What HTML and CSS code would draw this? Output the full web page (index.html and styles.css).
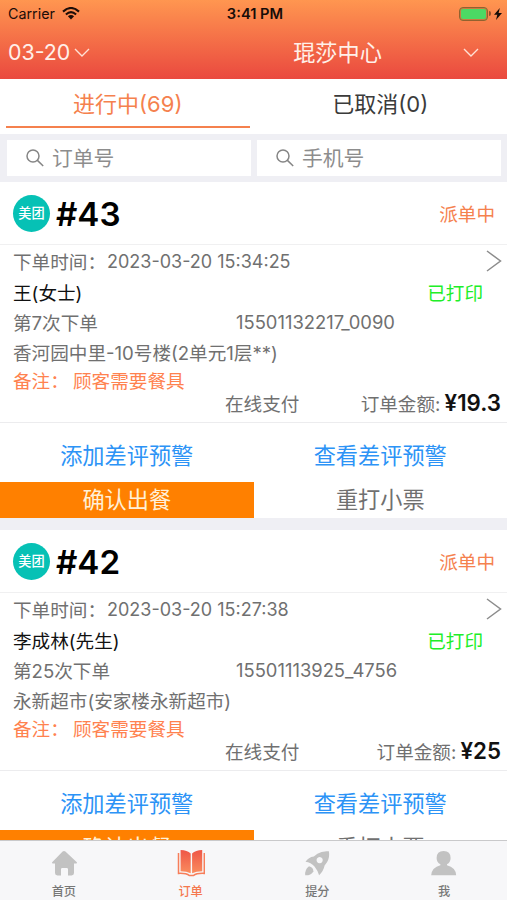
FILE: index.html
```html
<!DOCTYPE html>
<html lang="zh-CN">
<head>
<meta charset="utf-8">
<title>订单</title>
<link rel="stylesheet" href="styles.css">
</head>
<body>
<div class="app">
  <header class="header">
    <div class="status">
      <div class="carrier"><span>Carrier</span>
        <svg class="wifi" viewBox="0 0 18 13"><path d="M1 4.600Q9-2.600 17 4.600M3.900 7.500Q9 2.900 14.100 7.500" fill="none" stroke="#1c0d08" stroke-width="2.100"/><path d="M5.900 9.200Q9 6.700 12.100 9.200L9 12.400Z" fill="#1c0d08"/></svg>
      </div>
      <span class="clock">3:41 PM</span>
      <div class="power"><span class="battery"></span><span class="nub"></span>
        <svg class="bolt" viewBox="0 0 8 12"><path d="M5.800 0 0 6.800h3.300L2 12l6-7H4.600Z" fill="#160c08"/></svg>
      </div>
    </div>
    <div class="nav">
      <div class="date">03-20<svg class="chevron" viewBox="0 0 16 9"><path d="m1 1 7 7 7-7"/></svg></div>
      <span class="store">琨莎中心</span>
      <svg class="chevron" viewBox="0 0 16 9"><path d="m1 1 7 7 7-7"/></svg>
    </div>
  </header>
  <div class="tabs">
    <div class="tab active"><span>进行中(69)</span></div>
    <div class="tab"><span>已取消(0)</span></div>
  </div>
  <div class="search">
    <div class="field"><svg viewBox="0 0 18 18"><circle cx="7" cy="7" r="6"/><path d="m11.400 11.400 5.800 5.600"/></svg><span>订单号</span></div>
    <div class="field"><svg viewBox="0 0 18 18"><circle cx="7" cy="7" r="6"/><path d="m11.400 11.400 5.800 5.600"/></svg><span>手机号</span></div>
  </div>
  <main class="orders">
    <article class="order">
      <div class="order-head"><span class="logo">美团</span><span class="number">#43</span><span class="state">派单中</span></div>
      <div class="details">
        <div class="row time"><span class="time-label">下单时间：</span><span class="stamp">2023-03-20 15:34:25</span><svg class="arrow" viewBox="0 0 16 22"><path d="m1 1 13.500 10L1 21"/></svg></div>
        <div class="row customer"><span>王(女士)</span><span class="printed">已打印</span></div>
        <div class="row"><span class="count">第7次下单</span><span class="phone">15501132217_0090</span></div>
        <div class="row address">香河园中里-10号楼(2单元1层**)</div>
        <div class="row note"><span class="note-label">备注：</span><span>顾客需要餐具</span></div>
        <div class="row payment"><span class="method">在线支付</span><span class="total">订单金额: <b>¥19.3</b></span></div>
      </div>
      <div class="links"><a>添加差评预警</a><a>查看差评预警</a></div>
      <div class="buttons"><span class="primary">确认出餐</span><span>重打小票</span></div>
    </article>
    <article class="order">
      <div class="order-head"><span class="logo">美团</span><span class="number">#42</span><span class="state">派单中</span></div>
      <div class="details">
        <div class="row time"><span class="time-label">下单时间：</span><span class="stamp">2023-03-20 15:27:38</span><svg class="arrow" viewBox="0 0 16 22"><path d="m1 1 13.500 10L1 21"/></svg></div>
        <div class="row customer"><span>李成林(先生)</span><span class="printed">已打印</span></div>
        <div class="row"><span class="count">第25次下单</span><span class="phone">15501113925_4756</span></div>
        <div class="row address">永新超市(安家楼永新超市)</div>
        <div class="row note"><span class="note-label">备注：</span><span>顾客需要餐具</span></div>
        <div class="row payment"><span class="method">在线支付</span><span class="total">订单金额: <b>¥25</b></span></div>
      </div>
      <div class="links"><a>添加差评预警</a><a>查看差评预警</a></div>
      <div class="buttons"><span class="primary">确认出餐</span><span>重打小票</span></div>
    </article>
  </main>
  <nav class="tabbar">
    <div class="item"><svg viewBox="0 0 28 28"><path d="M12.600 2.600q1.400-1.200 2.800 0L26.600 13q1.300 1.300-.5 1.500H24v9.600q0 2.400-2.400 2.400H18v-6.200q0-1.300-1.300-1.300h-4.400q-1.300 0-1.300 1.300v6.200H7.400Q5 26.500 5 24.100v-9.600H2.900Q1.100 14.300 2.400 13Z" fill="#c2c2c2"/></svg><span>首页</span></div>
    <div class="item current"><svg viewBox="0 0 28 28"><defs><linearGradient id="book" x1="0" y1="0" x2="0" y2="1"><stop offset="0" stop-color="#ee5647"/><stop offset="1" stop-color="#fa8d5f"/></linearGradient></defs><path d="M3.600 1Q10.200 1.200 13.700 4.500V24.300Q9.700 22.500 3.600 22.300ZM25.200 1Q18.600 1.200 15.100 4.500V24.300Q19.100 22.500 25.200 22.300Z" fill="url(#book)"/><path d="M1.500 4v20.400q7.500-.4 11 2.200h3.800q3.500-2.600 11-2.200V4" fill="none" stroke="#f77e5a" stroke-width="1.500"/></svg><span>订单</span></div>
    <div class="item"><svg viewBox="0 0 28 28"><path fill-rule="evenodd" d="M25.900 2.300Q19 1.600 14.400 4.800L10.800 7.500Q5.500 8.200 2.500 12.700 8 13.500 11.500 17.400 14.500 21 16.100 26.300 20.600 21.800 21.600 16.500L24 13.200Q27 8.400 25.900 2.300ZM16.600 8a3.100 3.100 0 1 0 .1 0Z" fill="#c2c2c2"/><path d="M6 17.200Q1.600 20.500 2.200 26.300 7.700 26.600 10.400 22.400 10.300 18 6 17.200Z" fill="#c2c2c2"/></svg><span>提分</span></div>
    <div class="item"><svg viewBox="0 0 28 28"><path d="M13.600 2q7 0 7 7 0 4.300-3.600 6.300v1q8.600 2.200 9.200 9.900H1.200q.6-7.700 9.200-9.900v-1Q6.600 13.300 6.600 9q0-7 7-7Z" fill="#c2c2c2"/></svg><span>我</span></div>
  </nav>
</div>
</body>
</html>
```
FILE: styles.css
```css
* { box-sizing: border-box; }
body {
  margin: 0;
  font-family: Inter, "Noto Sans CJK SC", sans-serif;
  font-size: 18.600px;
  color: #707070;
  background: #fff;
}
.app { display: flex; flex-direction: column; width: 507px; height: 900px; overflow: hidden; }
svg { display: block; flex: none; }

.header { flex: none; height: 79px; background: linear-gradient(#ff9650, #ea493f); }
.status { display: grid; grid-template-columns: 1fr auto 1fr; align-items: center; height: 27px; padding: 0 5px 0 8px; color: #1c0d08; font-size: 14.300px; }
.carrier { display: flex; align-items: center; gap: 7px; }
.wifi { width: 18px; height: 13px; }
.clock { font-weight: 600; font-size: 14.700px; color: #160c08; }
.power { display: flex; align-items: center; justify-content: flex-end; }
.battery { width: 29px; height: 14px; border: 1px solid #92612f; border-radius: 4px; background: #4cd964; box-shadow: inset 0 0 0 1px #c97a40; }
.nub { width: 2px; height: 5px; margin-left: 1px; border-radius: 0 2px 2px 0; background: #92512c; }
.bolt { width: 8px; height: 12px; margin-left: 3px; }
.nav { display: grid; grid-template-columns: 215px 1fr 44px; align-items: center; height: 50px; padding-left: 8px; color: #fff0e9; font-size: 22.200px; }
.date { display: flex; align-items: center; gap: 4px; font-size: 21.400px; }
.chevron { width: 16px; height: 9px; fill: none; stroke: #ffe1d5; stroke-width: 1.400; }
.store { text-align: center; padding: 0 11px 2px 0; }

.tabs { flex: none; display: grid; grid-template-columns: 1fr 1fr; height: 55px; padding: 0 0 6px; color: #3b3b3b; font-size: 22px; }
.tab { display: flex; justify-content: center; align-items: center; margin: 0 4px 0 6px; padding-bottom: 2px; border-bottom: 2px solid transparent; }
.tab:last-child { margin: 0; }
.tab.active { color: #f5814e; border-color: #f5814e; }

.search { flex: none; display: grid; grid-template-columns: 244px 244px; gap: 6px; height: 48px; padding: 6px 7px; background: #efeff4; }
.field { display: flex; align-items: center; gap: 8px; padding-left: 19px; background: #fff; color: #8d8d8d; font-size: 20.800px; }
.field span { padding-bottom: 2px; }
.field svg { width: 18px; height: 18px; fill: none; stroke: #858585; stroke-width: 1.500; }

.orders { flex: 1; min-height: 0; overflow: hidden; }
.order { border-bottom: 12px solid #efeff4; }
.order-head { display: flex; align-items: center; height: 63px; padding: 0 12px 0 13px; border-bottom: 1px solid #f0f0f1; }
.logo { display: grid; place-items: center; width: 37px; height: 37px; padding-bottom: 2px; border-radius: 50%; background: #06c1b5; color: #fff; font-size: 13.200px; font-weight: 500; }
.number { margin-left: 6px; padding-top: 2px; color: #000; font-size: 33.200px; font-weight: 600; }
.state { margin-left: auto; padding-bottom: 2px; color: #f5814e; }

.details { height: 178px; padding: 0 6px 0 13px; border-bottom: 1px solid #ececee; }
.row { display: flex; align-items: center; height: 30px; white-space: nowrap; }
.time { height: 31px; }
.time-label { width: 94px; }
.stamp { padding-top: 2px; font-size: 18px; }
.arrow { width: 16px; height: 22px; margin: 0 -1px 0 auto; fill: none; stroke: #8c8c8c; stroke-width: 1.500; }
.customer { color: #111; }
.printed { margin-left: auto; padding-right: 18px; color: #20ee28; }
.count { width: 223px; }
.phone { padding-top: 2px; font-size: 18.400px; }
.note { height: 26px; color: #ff824f; }
.note-label { width: 60px; }
.payment { height: 21px; padding-left: 212px; }
.total { margin-left: auto; }
.total b { margin-left: -1px; color: #111; font-size: 22.300px; font-weight: 600; }
.links, .buttons { display: grid; grid-template-columns: 1fr 1fr; text-align: center; font-size: 22.200px; }
.links { height: 59px; align-items: center; padding-top: 3px; color: #2c93f6; }
.buttons { height: 36px; line-height: 36px; }
.primary { background: #ff8000; color: #fff0d8; }

.tabbar { flex: none; display: grid; grid-template-columns: repeat(4, 1fr); height: 60px; border-top: 1px solid #c9c9cb; background: #f7f7f9; font-size: 12.200px; color: #777; }
.item { display: flex; flex-direction: column; align-items: center; padding: 8px 0 0 1px; }
.item svg { width: 28px; height: 28px; }
.item span { margin-top: 6px; line-height: 18px; font-weight: 500; }
.current { color: #f5774e; }
```
